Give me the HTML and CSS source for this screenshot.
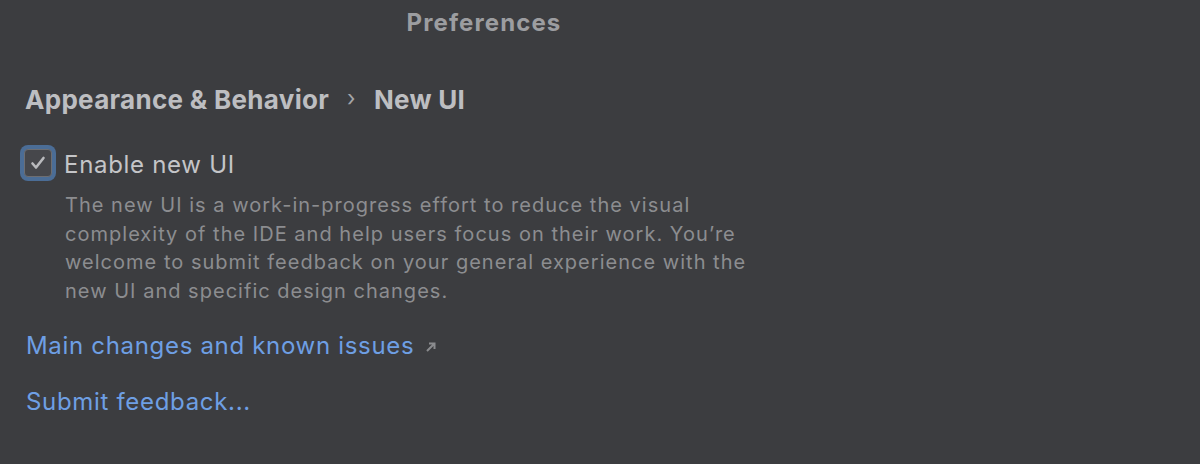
FILE: index.html
```html
<!DOCTYPE html>
<html>
<head>
<meta charset="utf-8">
<link rel="stylesheet" href="styles.css">
</head>
<body>
<div class="window">
  <div class="titlebar">Preferences</div>
  <div class="content">
    <div class="crumbs">
      <span>Appearance &amp; Behavior</span>
      <span class="sep">›</span>
      <span>New UI</span>
    </div>
    <div class="check-row">
      <span class="checkbox">
        <svg width="24" height="24" viewBox="0 0 24 24"><path d="M6.5 12.5 L10 16.5 L17.5 7" fill="none" stroke="#b9babd" stroke-width="2.6" stroke-linecap="round" stroke-linejoin="round"/></svg>
      </span>
      <span class="check-label">Enable new UI</span>
    </div>
    <p class="desc">The new UI is a work-in-progress effort to reduce the visual complexity of the IDE and help users focus on their work. You’re welcome to submit feedback on your general experience with the new UI and specific design changes.</p>
    <div class="links">
      <a class="link">Main changes and known issues <svg class="ext" width="14" height="14" viewBox="0 0 14 14"><path d="M3 11 L10 4 M5 3.5 H10.5 V9" fill="none" stroke="#8a8b8e" stroke-width="2"/></svg></a>
      <a class="link">Submit feedback...</a>
    </div>
  </div>
</div>
</body>
</html>
```
FILE: styles.css
```css
html, body {
  margin: 0;
  padding: 0;
  background: #3c3d40;
}
body {
  font-family: Inter, "Noto Sans", sans-serif;
  width: 1200px;
  height: 464px;
  overflow: hidden;
}
.titlebar {
  height: 44px;
  display: flex;
  align-items: center;
  justify-content: center;
  padding-right: 232px;
  box-sizing: border-box;
  width: 1200px;
  font-size: 24px;
  font-weight: 700;
  letter-spacing: 1.1px;
  color: #9c9da0;
  white-space: nowrap;
}
.content {
  padding-left: 25px;
  padding-top: 36px;
}
.crumbs {
  display: flex;
  align-items: center;
  gap: 18px;
  font-size: 26px;
  font-weight: 700;
  color: #bdbec1;
  height: 38px;
  letter-spacing: 0.3px;
}
.crumbs .sep {
  font-weight: 400;
  color: #a4a5a8;
  font-size: 22px;
  margin-top: -3px;
}
.check-row {
  display: flex;
  align-items: center;
  margin-top: 27px;
  margin-left: -5px;
  height: 36px;
}
.checkbox {
  width: 28px;
  height: 28px;
  box-sizing: border-box;
  border: 1px solid #6d6e72;
  border-radius: 4px;
  background: #46474b;
  box-shadow: 0 0 0 4px #4b6d96;
  display: flex;
  align-items: center;
  justify-content: center;
  margin-left: 4px;
}
.check-label {
  margin-left: 12px;
  margin-top: 2px;
  font-size: 24px;
  letter-spacing: 0.7px;
  color: #c4c5c8;
}
.desc {
  margin: 10px 0 0 40px;
  width: 700px;
  font-size: 20px;
  line-height: 28.5px;
  letter-spacing: 1.02px;
  color: #8c8d90;
}
.links {
  display: flex;
  flex-direction: column;
  gap: 25px;
  margin-top: 25px;
  margin-left: 1px;
}
.link {
  font-size: 24px;
  color: #6e9fe4;
  line-height: 31px;
  letter-spacing: 0.68px;
  display: flex;
  align-items: center;
}
.ext {
  margin-left: 10px;
  margin-top: 2px;
}
```
